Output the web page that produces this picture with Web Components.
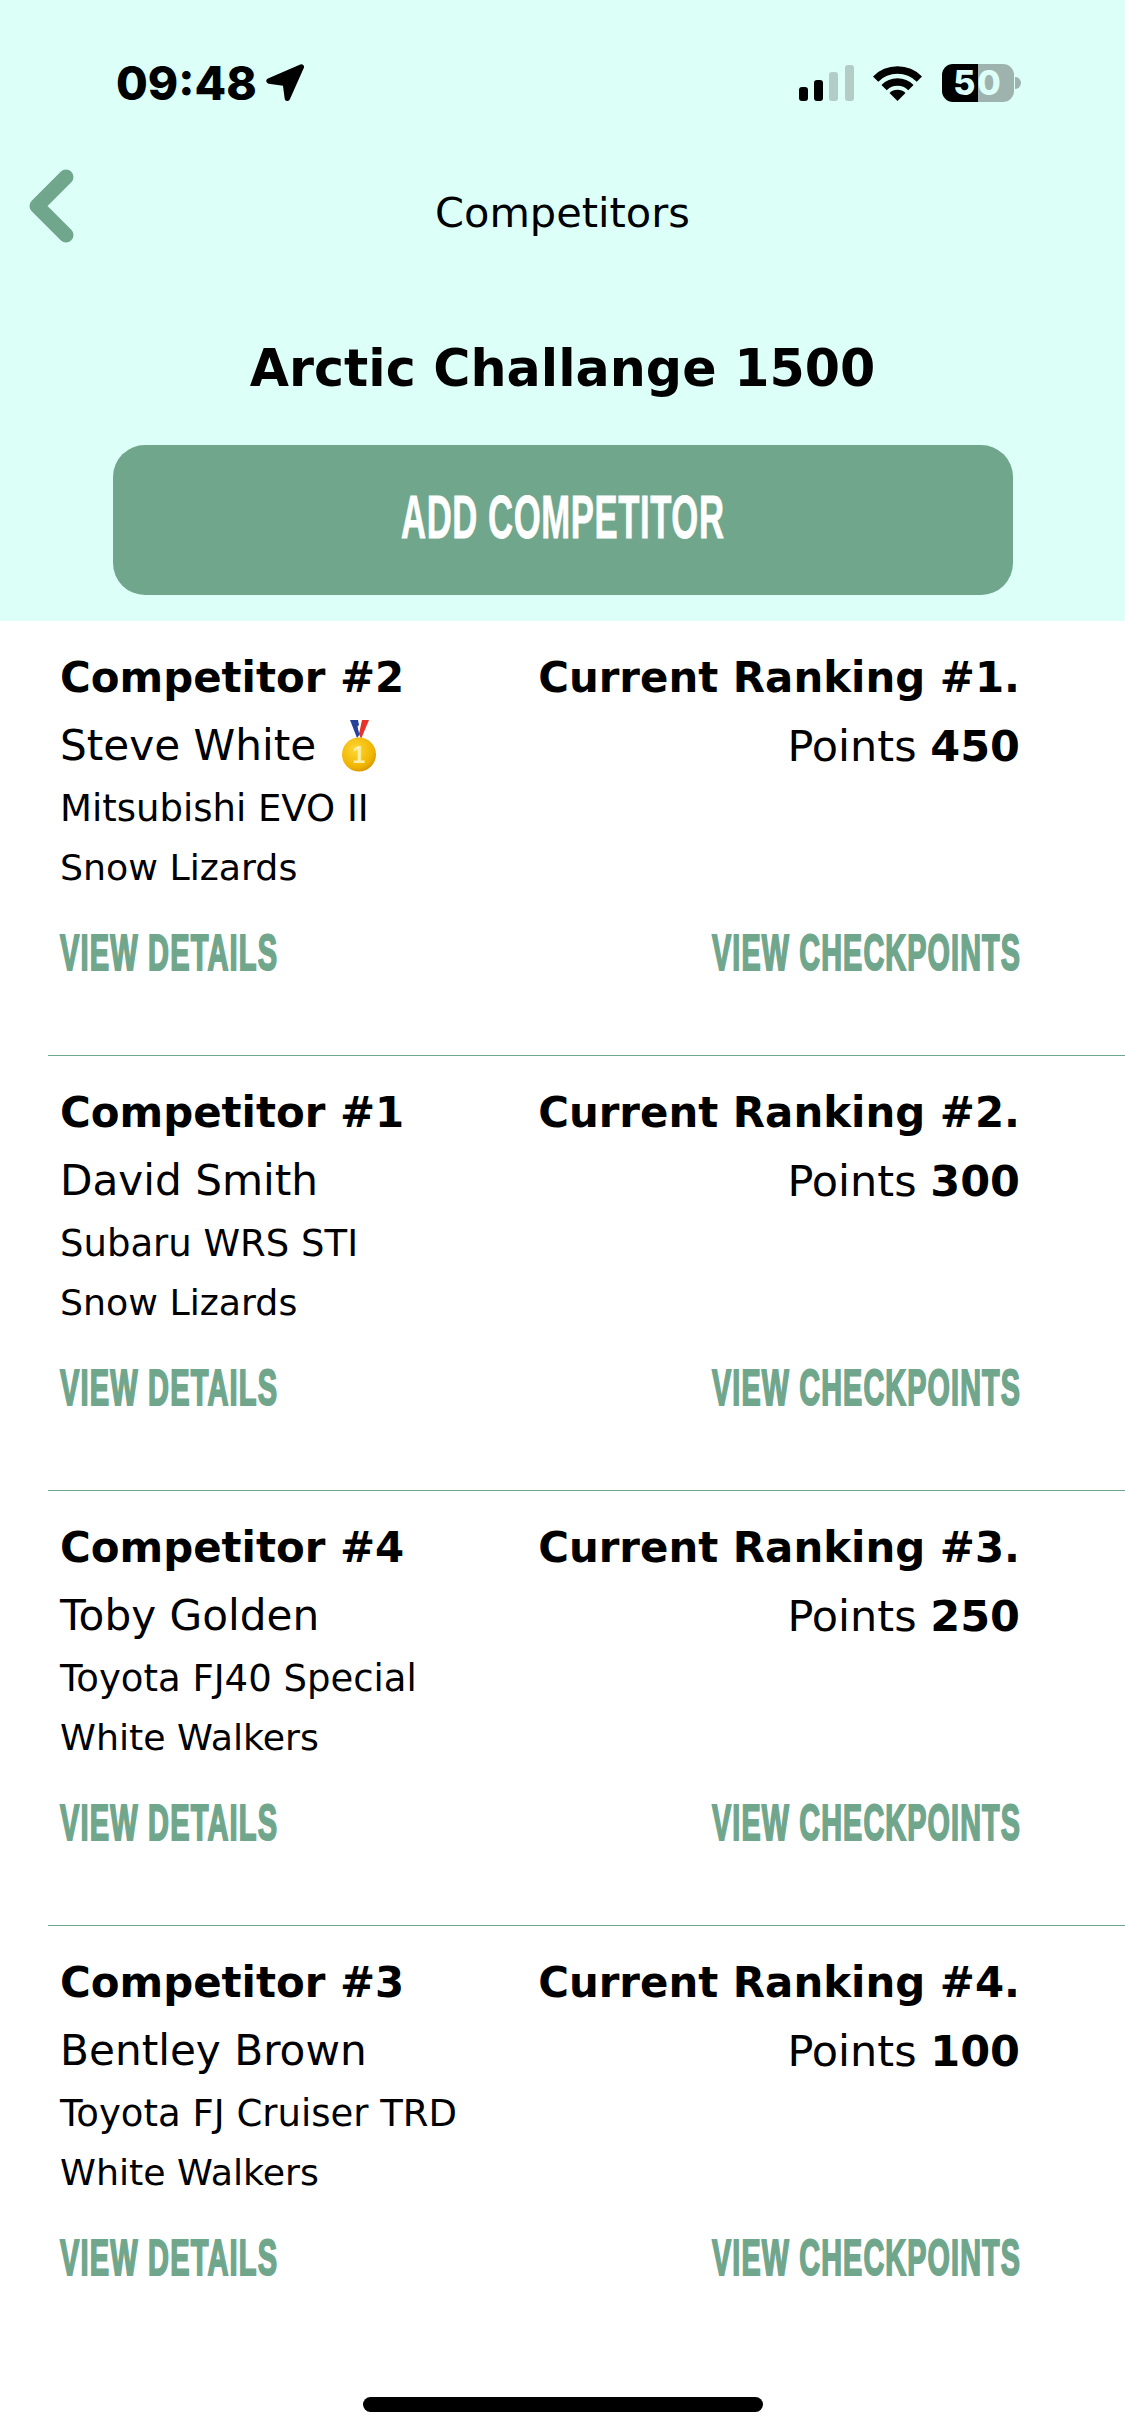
<!DOCTYPE html>
<html lang="en">
<head>
<meta charset="utf-8">
<title>Competitors</title>
<style>
  html, body { margin: 0; padding: 0; background: #fff; }
  body { font-family: "DejaVu Sans", Verdana, sans-serif; color: #000; }
</style>
</head>
<body>
<competitors-screen>
  <status-bar slot="status"></status-bar>
  <nav-title slot="nav">Competitors</nav-title>
  <span slot="event">Arctic Challange 1500</span>
  <add-button slot="action">ADD COMPETITOR</add-button>

  <competitor-row>
    <span slot="number">Competitor #2</span>
    <span slot="name">Steve White</span>
    <gold-medal slot="badge"></gold-medal>
    <span slot="car">Mitsubishi EVO II</span>
    <span slot="team">Snow Lizards</span>
    <span slot="rank">Current Ranking #1.</span>
    <span slot="points">450</span>
  </competitor-row>
  <competitor-row>
    <span slot="number">Competitor #1</span>
    <span slot="name">David Smith</span>
    <span slot="car">Subaru WRS STI</span>
    <span slot="team">Snow Lizards</span>
    <span slot="rank">Current Ranking #2.</span>
    <span slot="points">300</span>
  </competitor-row>
  <competitor-row>
    <span slot="number">Competitor #4</span>
    <span slot="name">Toby Golden</span>
    <span slot="car">Toyota FJ40 Special</span>
    <span slot="team">White Walkers</span>
    <span slot="rank">Current Ranking #3.</span>
    <span slot="points">250</span>
  </competitor-row>
  <competitor-row last>
    <span slot="number">Competitor #3</span>
    <span slot="name">Bentley Brown</span>
    <span slot="car">Toyota FJ Cruiser TRD</span>
    <span slot="team">White Walkers</span>
    <span slot="rank">Current Ranking #4.</span>
    <span slot="points">100</span>
  </competitor-row>
</competitors-screen>

<script>
// condensed poster style label, squeezed to the width it has in the design
class FitLabel extends HTMLElement {
  connectedCallback() {
    const shadowRoot = this.attachShadow({ mode: "open" });
    const w = this.getAttribute("w");
    shadowRoot.innerHTML = `
    <style>
      :host { display: inline-block; width: ${w}px; height: 60px; overflow: visible; white-space: nowrap; }
      span {
        display: inline-block;
        font-family: "Liberation Sans", Arial, sans-serif;
        font-weight: 700;
        font-size: var(--label-size, 50px);
        letter-spacing: var(--label-spacing, 2px);
        line-height: 60px;
        -webkit-text-stroke: var(--label-stroke, 2px) currentColor;
        transform-origin: 0 50%;
      }
    </style>
    <span><slot></slot></span>
    `;
    const span = shadowRoot.querySelector("span");
    // leave the spacing after the last letter out of the fit
    const spacing = parseFloat(getComputedStyle(span).letterSpacing) || 0;
    span.style.transform = `scaleX(${w / (span.getBoundingClientRect().width - spacing)})`;
  }
}
customElements.define("fit-label", FitLabel);

class StatusBar extends HTMLElement {
  connectedCallback() {
    const shadowRoot = this.attachShadow({ mode: "open" });
    shadowRoot.innerHTML = `
    <style>
      :host { display: flex; height: 166px; align-items: center; justify-content: space-between; padding: 0 104px 0 116px; box-sizing: border-box; }
      .left, .right { display: flex; align-items: center; }
      .time { font-family: Inter, "Liberation Sans", sans-serif; font-weight: 800; font-size: 46px; line-height: 56px; letter-spacing: 0; }
      .arrow { margin-left: 9px; margin-top: -2px; }
      .signal { margin-right: 19px; }
      .wifi { margin-right: 20px; }
      .battery { display: flex; align-items: center; }
      .cell {
        width: 72px; height: 38px; border-radius: 11px;
        background: linear-gradient(90deg, #000 36px, #9fb3ae 36px);
        color: #dcfff8; font-family: Inter, "Liberation Sans", sans-serif; font-weight: 800;
        font-size: 34px; line-height: 38px; letter-spacing: 2px; text-align: center;
      }
      .tip { width: 6px; height: 12px; margin-left: 1px; border-radius: 0 6px 6px 0; background: #9fb3ae; }
    </style>
    <div class="left">
      <span class="time">09:48</span>
      <svg class="arrow" width="40" height="40" viewBox="800 70 120 120"><polygon points="906,85 809,127 858,134 864,179" fill="#000" stroke="#000" stroke-width="16" stroke-linejoin="round"/></svg>
    </div>
    <div class="right">
      <svg class="signal" width="55" height="36" viewBox="0 0 55 36">
        <rect x="0" y="22" width="9" height="14" rx="3" fill="#000"/>
        <rect x="15" y="15" width="9" height="21" rx="3" fill="#000"/>
        <rect x="30" y="7" width="9" height="29" rx="3" fill="#b3ccc6"/>
        <rect x="46" y="0" width="9" height="36" rx="3" fill="#b3ccc6"/>
      </svg>
      <svg class="wifi" width="49" height="36" viewBox="0 0 49 36" fill="none" stroke="#000" stroke-width="7.5">
        <path d="M2.6 14.1A31 31 0 0 1 46.4 14.1"/>
        <path d="M11.1 22.6A19 19 0 0 1 37.9 22.6"/>
        <path d="M24.5 36L16.5 28A11.3 11.3 0 0 1 32.5 28Z" fill="#000" stroke="none"/>
      </svg>
      <div class="battery"><div class="cell">50</div><div class="tip"></div></div>
    </div>
    `;
  }
}
customElements.define("status-bar", StatusBar);

class NavTitle extends HTMLElement {
  connectedCallback() {
    const shadowRoot = this.attachShadow({ mode: "open" });
    shadowRoot.innerHTML = `
    <style>
      :host { display: grid; grid-template-columns: 1fr auto 1fr; align-items: center; height: 90px; font-size: 41.5px; line-height: 90px; }
      svg { margin: -14px 0 0 26px; display: block; }
    </style>
    <svg width="50" height="80" viewBox="0 0 50 80" fill="none" stroke="#70a68c" stroke-width="15" stroke-linecap="round" stroke-linejoin="round"><path d="M40 11L11 40L40 69"/></svg>
    <span><slot></slot></span>
    <span></span>
    `;
  }
}
customElements.define("nav-title", NavTitle);

class AddButton extends HTMLElement {
  connectedCallback() {
    const shadowRoot = this.attachShadow({ mode: "open" });
    shadowRoot.innerHTML = `
    <style>
      :host {
        display: flex; align-items: center; justify-content: center;
        width: 900px; height: 150px; border-radius: 32px;
        background: #70a68c; color: #fff;
        --label-size: 62px; --label-stroke: .8px; --label-spacing: 1px;
      }
      fit-label { margin-top: -6px; }
    </style>
    <fit-label w="323"><slot></slot></fit-label>
    `;
  }
}
customElements.define("add-button", AddButton);

class GoldMedal extends HTMLElement {
  connectedCallback() {
    const shadowRoot = this.attachShadow({ mode: "open" });
    shadowRoot.innerHTML = `
    <style>
      :host { display: inline-block; width: 34px; height: 52px; margin-left: 26px; vertical-align: -12px; }
      svg { display: block; overflow: visible; }
      text { font-family: "Liberation Sans", sans-serif; font-weight: 700; font-size: 23px; fill: #fbeeb0; }
    </style>
    <svg width="34" height="52" viewBox="0 0 34 52">
      <defs>
        <radialGradient id="g" cx=".4" cy=".35" r=".75"><stop offset="0" stop-color="#fdd835"/><stop offset=".7" stop-color="#f0b400"/><stop offset="1" stop-color="#c98a00"/></radialGradient>
      </defs>
      <path d="M8 0L14 0L18 14L15 18Z" fill="#27409a"/>
      <path d="M14 0L17 0L19 9L17 13Z" fill="#fff"/>
      <path d="M20 0L27 0L19 19L17 14Z" fill="#e6322b"/>
      <path d="M13 0L16 0L17 5L15 7Z" fill="#27409a"/>
      <circle cx="17" cy="34.500" r="17" fill="url(#g)"/>
      <text x="17" y="43" text-anchor="middle">1</text>
    </svg>
    `;
  }
}
customElements.define("gold-medal", GoldMedal);

class CompetitorRow extends HTMLElement {
  connectedCallback() {
    const shadowRoot = this.attachShadow({ mode: "open" });
    shadowRoot.innerHTML = `
    <style>
      :host { display: block; height: 435px; margin-left: 48px; padding: 27px 105px 0 12px; box-sizing: border-box; border-bottom: 1px solid #70a68c; }
      :host([last]) { border-bottom: 0; }
      .top { display: flex; justify-content: space-between; font-weight: 700; font-size: 41.9px; line-height: 59px; }
      .mid { display: flex; justify-content: space-between; font-size: 42.2px; line-height: 76px; white-space: nowrap; margin-top: 1px; }
      .points { font-size: 43px; }
      .mid b { font-weight: 700; }
      .car { font-size: 37px; line-height: 50px; }
      .team { font-size: 36.3px; line-height: 50px; margin-top: 9px; }
      .links { display: flex; justify-content: space-between; margin-top: 30px; color: #70a68c; }
    </style>
    <div class="top"><slot name="number"></slot><slot name="rank"></slot></div>
    <div class="mid">
      <div><slot name="name"></slot><slot name="badge"></slot></div>
      <div class="points">Points <b><slot name="points"></slot></b></div>
    </div>
    <div class="car"><slot name="car"></slot></div>
    <div class="team"><slot name="team"></slot></div>
    <div class="links">
      <fit-label w="217">VIEW DETAILS</fit-label>
      <fit-label w="308">VIEW CHECKPOINTS</fit-label>
    </div>
    `;
  }
}
customElements.define("competitor-row", CompetitorRow);

class CompetitorsScreen extends HTMLElement {
  connectedCallback() {
    const shadowRoot = this.attachShadow({ mode: "open" });
    shadowRoot.innerHTML = `
    <style>
      :host { display: flex; flex-direction: column; height: 2436px; overflow: hidden; }
      header { display: flex; flex-direction: column; height: 621px; background: #dcfff8; flex: none; }
      .nav { margin-top: 2px; }
      .event { font-weight: 700; font-size: 50.7px; line-height: 80px; margin-top: 71px; text-align: center; }
      .action { display: flex; justify-content: center; margin-top: 36px; }
      .home { width: 400px; height: 15px; border-radius: 8px; background: #000; margin: auto auto 24px; }
    </style>
    <header>
      <slot name="status"></slot>
      <div class="nav"><slot name="nav"></slot></div>
      <div class="event"><slot name="event"></slot></div>
      <div class="action"><slot name="action"></slot></div>
    </header>
    <slot></slot>
    <div class="home"></div>
    `;
  }
}
customElements.define("competitors-screen", CompetitorsScreen);
</script>
</body>
</html>
